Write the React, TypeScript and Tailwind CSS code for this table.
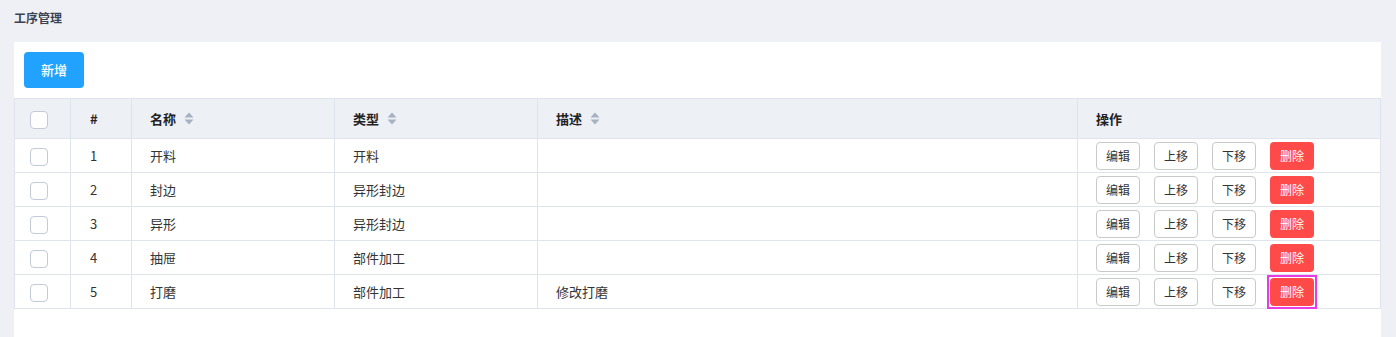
import React from "react";

type Row = { id: number; name: string; type: string; desc: string };

const rows: Row[] = [
  { id: 1, name: "开料", type: "开料", desc: "" },
  { id: 2, name: "封边", type: "异形封边", desc: "" },
  { id: 3, name: "异形", type: "异形封边", desc: "" },
  { id: 4, name: "抽屉", type: "部件加工", desc: "" },
  { id: 5, name: "打磨", type: "部件加工", desc: "修改打磨" },
];

function SortIcon() {
  return (
    <svg width="10" height="13" viewBox="0 0 10 13" className="ml-[8px] inline-block">
      <path d="M5 0.5 L9.5 5.5 L0.5 5.5 Z" fill="#a7b1c4" />
      <path d="M0.5 7.5 L9.5 7.5 L5 12.5 Z" fill="#a7b1c4" />
    </svg>
  );
}

function Checkbox() {
  return <span className="inline-block h-[18px] w-[18px] rounded-[4px] border border-[#c3cbd8] bg-white align-middle" />;
}

function GhostButton({ label }: { label: string }) {
  return (
    <button className="h-[28px] w-[44px] rounded-[4px] border border-[#c9c9c9] bg-white text-[12px] text-[#333]">
      {label}
    </button>
  );
}

function DeleteButton({ marked }: { marked?: boolean }) {
  return (
    <button className="relative h-[28px] w-[44px] rounded-[4px] bg-[#ff4a4a] text-[12px] text-white">
      删除
      {marked && <span className="pointer-events-none absolute -inset-[3px] border-2 border-[#e83be8]" />}
    </button>
  );
}

export default function App() {
  const cell = "border border-[#dfe4ec]";
  return (
    <div
      className="min-h-[337px] w-[1396px] bg-[#eef0f5] pl-[14px] pr-[15px]"
      style={{ fontFamily: '"Noto Sans CJK SC", "Noto Sans", sans-serif' }}
    >
      <div className="flex h-[42px] items-center pb-[6px] text-[12px] font-bold text-[#3b4250]">工序管理</div>
      <div className="min-h-[295px] bg-white">
        <div className="p-[10px]">
          <button className="h-[36px] w-[60px] rounded-[4px] bg-[#21a2ff] text-[13px] font-medium text-white">新增</button>
        </div>
        <table className="w-full table-fixed border-collapse text-[13px] text-[#333]">
          <colgroup>
            <col className="w-[56px]" />
            <col className="w-[61px]" />
            <col className="w-[203px]" />
            <col className="w-[203px]" />
            <col className="w-[540px]" />
            <col />
          </colgroup>
          <thead>
            <tr className="h-[40px] bg-[#edf0f5] text-left font-bold text-[#222]">
              <th className={cell + " pl-[15px]"}>
                <Checkbox />
              </th>
              <th className={cell + " pl-[19px]"}>#</th>
              <th className={cell + " pl-[18px]"}>
                <span className="inline-flex items-center">
                  名称
                  <SortIcon />
                </span>
              </th>
              <th className={cell + " pl-[18px]"}>
                <span className="inline-flex items-center">
                  类型
                  <SortIcon />
                </span>
              </th>
              <th className={cell + " pl-[18px]"}>
                <span className="inline-flex items-center">
                  描述
                  <SortIcon />
                </span>
              </th>
              <th className={cell + " pl-[18px]"}>操作</th>
            </tr>
          </thead>
          <tbody>
            {rows.map((r) => (
              <tr key={r.id} className="h-[34px]">
                <td className={cell + " pl-[15px]"}>
                  <Checkbox />
                </td>
                <td className={cell + " pl-[19px]"}>{r.id}</td>
                <td className={cell + " pl-[18px]"}>{r.name}</td>
                <td className={cell + " pl-[18px]"}>{r.type}</td>
                <td className={cell + " pl-[18px]"}>{r.desc}</td>
                <td className={cell + " pl-[18px]"}>
                  <div className="flex gap-[14px]">
                    <GhostButton label="编辑" />
                    <GhostButton label="上移" />
                    <GhostButton label="下移" />
                    <DeleteButton marked={r.id === 5} />
                  </div>
                </td>
              </tr>
            ))}
          </tbody>
        </table>
      </div>
    </div>
  );
}
